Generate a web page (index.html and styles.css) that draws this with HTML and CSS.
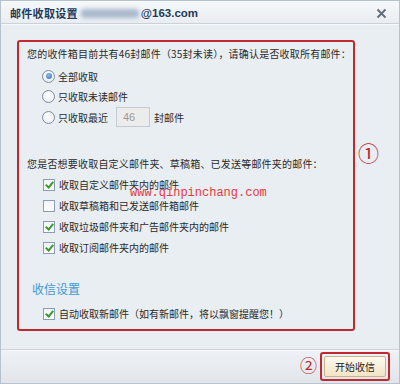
FILE: index.html
```html
<!DOCTYPE html>
<html lang="zh-CN">
<head>
    <meta charset="UTF-8">
    <title>邮件收取设置</title>
    <link rel="stylesheet" href="styles.css">
</head>
<body>
    <div class="dialog">
        <div class="titlebar">
            <span class="title">邮件收取设置</span>
            <span class="masked"></span>
            <span class="addr">@163.com</span>
            <span class="close">
                <svg width="11" height="11" viewBox="0 0 11 11"><path d="M1.5 1.5 L9.5 9.5 M9.5 1.5 L1.5 9.5" stroke="#5f6b7a" stroke-width="1.8" fill="none"/></svg>
            </span>
        </div>

        <div class="main">
            <div class="frame">
                <p class="lead">您的收件箱目前共有46封邮件（35封未读），请确认是否收取所有邮件：</p>
                <div class="radios">
                    <label class="row"><span class="radio on"></span>全部收取</label>
                    <label class="row"><span class="radio"></span>只收取未读邮件</label>
                    <label class="row row-recent"><span class="radio"></span>只收取最近<span class="num">46</span>封邮件</label>
                </div>

                <p class="lead lead-2">您是否想要收取自定义邮件夹、草稿箱、已发送等邮件夹的邮件：</p>
                <div class="checks">
                    <label class="row"><span class="check on"></span>收取自定义邮件夹内的邮件</label>
                    <label class="row"><span class="check"></span>收取草稿箱和已发送邮件箱邮件</label>
                    <label class="row"><span class="check on"></span>收取垃圾邮件夹和广告邮件夹内的邮件</label>
                    <label class="row"><span class="check on"></span>收取订阅邮件夹内的邮件</label>
                </div>

                <h3 class="section">收信设置</h3>
                <div class="checks checks-auto">
                    <label class="row"><span class="check on"></span>自动收取新邮件（如有新邮件，将以飘窗提醒您！）</label>
                </div>

                <span class="watermark">www.qinpinchang.com</span>
            </div>
            <span class="mark mark-1">①</span>
        </div>

        <div class="footer">
            <span class="mark mark-2">②</span>
            <div class="btn-frame"><button class="btn">开始收信</button></div>
        </div>
    </div>
</body>
</html>
```

FILE: styles.css
```css
body {
    margin: 0;
    font-family: "Noto Sans CJK SC", "Liberation Sans", sans-serif;
    font-size: 10px;
    color: #2a2a2a;
}
.dialog {
    width: 400px;
    height: 384px;
    box-sizing: border-box;
    border: 1px solid #b8c2ce;
    background: #e9eef3;
    display: flex;
    flex-direction: column;
}
.titlebar {
    height: 20px;
    border-bottom: 1px solid #c9d1db;
    box-shadow: 0 1px 0 #f7f9fb;
    background: linear-gradient(#f6f8fa, #e9edf2);
    display: flex;
    align-items: center;
    padding: 2px 0 0 9px;
}
.title {
    font-size: 11px;
    font-weight: bold;
    letter-spacing: 0.3px;
    color: #1e3a5c;
}
.masked {
    width: 58px;
    height: 9px;
    margin-left: 3px;
    background: #a9b8cd;
    filter: blur(2px);
    border-radius: 3px;
}
.addr {
    font-family: "Liberation Sans", sans-serif;
    font-size: 11.5px;
    font-weight: bold;
    color: #1e3a5c;
    margin-left: 2px;
}
.close {
    margin-left: auto;
    margin-right: 12px;
    display: flex;
}
.main {
    flex: 1;
    display: flex;
    align-items: flex-start;
    padding: 16px 0 0 16px;
}
.frame {
    position: relative;
    width: 334px;
    border: 2px solid #bf2a30;
    border-radius: 3px;
    padding: 0 0 5px;
}
.lead {
    margin: 5px 0 0 8px;
    line-height: 14px;
    letter-spacing: 0.2px;
}
.lead-2 {
    margin-top: 29px;
}
.radios {
    margin-top: 5px;
    padding-left: 23px;
}
.row {
    display: flex;
    align-items: center;
    height: 20px;
}
.row-recent {
    height: 22px;
}
.radio {
    width: 11px;
    height: 11px;
    border: 1px solid #7d8ca2;
    border-radius: 50%;
    background: radial-gradient(circle at 50% 40%, #ffffff, #e3e8ee);
    margin-right: 3px;
    position: relative;
}
.radio.on::after {
    content: "";
    position: absolute;
    left: 2.5px;
    top: 2.5px;
    width: 6px;
    height: 6px;
    border-radius: 50%;
    background: radial-gradient(circle at 40% 35%, #8fc0f0, #2e67b3);
}
.num {
    width: 26px;
    height: 18px;
    margin: 0 4px 0 8px;
    border: 1px solid #c4cad2;
    background: #ececec;
    color: #9a9a9a;
    font-family: "Liberation Sans", sans-serif;
    font-size: 11px;
    line-height: 18px;
    padding-left: 6px;
}
.checks {
    margin-top: 3px;
    padding-left: 24px;
}
.checks .row {
    height: 21px;
}
.check {
    width: 10px;
    height: 10px;
    border: 1px solid #8b9db6;
    background: linear-gradient(#f2f5f8, #ffffff);
    margin-right: 4px;
    position: relative;
}
.check.on::after {
    content: "";
    position: absolute;
    left: 3px;
    top: 0;
    width: 3px;
    height: 6px;
    border: solid #3b9a2a;
    border-width: 0 2px 2px 0;
    transform: rotate(40deg);
}
.section {
    margin: 23px 0 0 13px;
    font-size: 12px;
    font-weight: normal;
    line-height: 16px;
    color: #3d9ad6;
}
.checks-auto {
    margin-top: 6px;
}
.watermark {
    position: absolute;
    left: 111px;
    top: 144px;
    font-family: "Liberation Mono", monospace;
    font-size: 12px;
    line-height: 14px;
    color: #e63a3f;
}
.mark {
    font-family: "DejaVu Serif", serif;
    color: #b9262c;
    line-height: 1;
}
.mark-1 {
    font-size: 21px;
    margin: 104px 0 0 3px;
}
.footer {
    height: 33px;
    border-top: 1px solid #ccd3dc;
    box-shadow: inset 0 1px 0 #f7f9fb;
    background: linear-gradient(#eef1f5, #e2e6eb);
    display: flex;
    align-items: center;
    justify-content: flex-end;
    padding-right: 9px;
}
.mark-2 {
    font-size: 17px;
    margin-right: 3px;
}
.btn-frame {
    border: 2px solid #bf2a30;
    border-radius: 3px;
    padding: 2px;
}
.btn {
    width: 62px;
    height: 21px;
    border: 1px solid #c9b489;
    border-radius: 2px;
    background: linear-gradient(#fffaf0, #f2e4c5);
    font-family: "Noto Sans CJK SC", sans-serif;
    font-size: 10px;
    color: #222;
    padding: 0;
    display: block;
}
```
